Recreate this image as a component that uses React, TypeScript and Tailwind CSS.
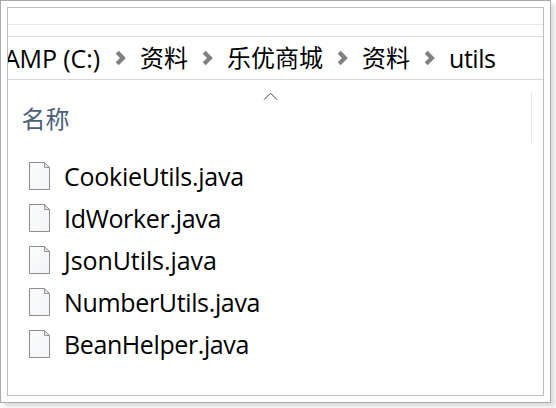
const latin = "font-['Open_Sans','Noto_Sans_CJK_SC',sans-serif]";

const files = [
  { name: "CookieUtils.java", tracking: "tracking-[-0.27px]" },
  { name: "IdWorker.java", tracking: "tracking-[-0.32px]" },
  { name: "JsonUtils.java", tracking: "tracking-[-0.08px]" },
  { name: "NumberUtils.java", tracking: "tracking-[-0.35px]" },
  { name: "BeanHelper.java", tracking: "tracking-[-0.4px]" },
];

function Chevron() {
  return (
    <svg className="mx-[14px] h-[16px] w-[11px] shrink-0" viewBox="0 0 11 16" fill="none">
      <path d="M2.2 2.3 L7.9 8 L2.2 13.7" stroke="#808080" strokeWidth="4.2" />
    </svg>
  );
}

function FileIcon() {
  return (
    <svg className="h-[28px] w-[21px] shrink-0" viewBox="0 0 21 28" fill="none">
      <defs>
        <linearGradient id="paper" x1="0" y1="0" x2="1" y2="1">
          <stop offset="0" stopColor="#fbfcfc" />
          <stop offset="1" stopColor="#f2f4f6" />
        </linearGradient>
      </defs>
      <path d="M.5 .5 H15.5 L20.5 5.5 V27.5 H.5 Z" fill="url(#paper)" stroke="#8c8c8c" />
      <path d="M15.5 .5 V5.5 H20.5 Z" fill="#e2e2e2" stroke="#949494" />
    </svg>
  );
}

export default function App() {
  return (
    <div className={`h-[408px] w-[556px] overflow-hidden bg-white text-black ${latin}`}>
      <div className="h-[403px] w-[551px] border border-[#a8a8a8] bg-white p-[6px] shadow-[4px_4px_4px_#dedede]">
        <div className="flex h-[389px] w-[537px] flex-col overflow-hidden border border-[#bcbcbc]">
          <div className="h-[17px] shrink-0 border-b border-[#e8e8e8]" />
          <div className="h-[12px] shrink-0 border-b border-[#d9d9d9]" />
          <nav className="flex h-[43px] shrink-0 items-center whitespace-nowrap border-b border-[#d9d9d9] text-[24px] leading-[42px]">
            <div className="flex w-[93px] shrink-0 justify-end pr-px text-[25px] tracking-[-0.1px]">
              <span>AMP (C:)</span>
            </div>
            <Chevron />
            <span className="w-[48px]">资料</span>
            <Chevron />
            <span className="w-[96px]">乐优商城</span>
            <Chevron />
            <span className="w-[48px]">资料</span>
            <Chevron />
            <span className="text-[25px] tracking-[-0.45px]">utils</span>
          </nav>
          <header className="relative flex h-[75px] shrink-0 justify-between pl-[13.5px] pr-[11px]">
            <span className="pt-[21px] text-[24px] leading-[36px] text-[#4c607a]">名称</span>
            <svg className="absolute left-[255px] top-[12px] h-[9px] w-[15px]" viewBox="0 0 15 9" fill="none">
              <path d="M1 7.7 L7.5 1.2 L14 7.7" stroke="#444" strokeWidth="1" />
            </svg>
            <div className="mt-[12px] h-[51px] w-px bg-[#e5e5e5]" />
          </header>
          <ul>
            {files.map((file) => (
              <li key={file.name} className="flex h-[42px] items-center gap-[14px] pl-[21px]">
                <FileIcon />
                <span className={`text-[25px] leading-[42px] ${file.tracking}`}>{file.name}</span>
              </li>
            ))}
          </ul>
        </div>
      </div>
    </div>
  );
}
